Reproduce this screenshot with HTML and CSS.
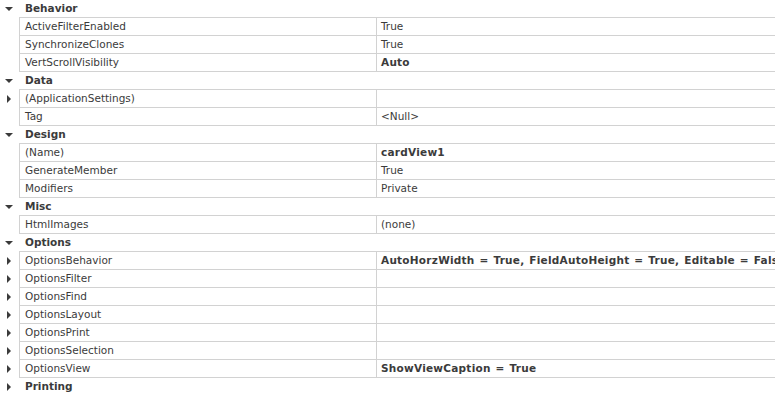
FILE: index.html
```html
<!DOCTYPE html>
<html>
<head>
<meta charset="utf-8">
<link rel="stylesheet" href="styles.css">
</head>
<body>
<div class="grid">
  <div class="cat"><span class="gut"><span class="arr-down"></span></span><span class="cat-name">Behavior</span></div>
  <div class="rows">
    <div class="row"><span class="gut"></span><span class="name">ActiveFilterEnabled</span><span class="val">True</span></div>
    <div class="row"><span class="gut"></span><span class="name">SynchronizeClones</span><span class="val">True</span></div>
    <div class="row"><span class="gut"></span><span class="name">VertScrollVisibility</span><span class="val bold">Auto</span></div>
  </div>
  <div class="cat"><span class="gut"><span class="arr-down"></span></span><span class="cat-name">Data</span></div>
  <div class="rows">
    <div class="row"><span class="gut"><span class="arr-right"></span></span><span class="name">(ApplicationSettings)</span><span class="val"></span></div>
    <div class="row"><span class="gut"></span><span class="name">Tag</span><span class="val">&lt;Null&gt;</span></div>
  </div>
  <div class="cat"><span class="gut"><span class="arr-down"></span></span><span class="cat-name">Design</span></div>
  <div class="rows">
    <div class="row"><span class="gut"></span><span class="name">(Name)</span><span class="val bold">cardView1</span></div>
    <div class="row"><span class="gut"></span><span class="name">GenerateMember</span><span class="val">True</span></div>
    <div class="row"><span class="gut"></span><span class="name">Modifiers</span><span class="val">Private</span></div>
  </div>
  <div class="cat"><span class="gut"><span class="arr-down"></span></span><span class="cat-name">Misc</span></div>
  <div class="rows">
    <div class="row"><span class="gut"></span><span class="name">HtmlImages</span><span class="val">(none)</span></div>
  </div>
  <div class="cat"><span class="gut"><span class="arr-down"></span></span><span class="cat-name">Options</span></div>
  <div class="rows">
    <div class="row"><span class="gut"><span class="arr-right"></span></span><span class="name">OptionsBehavior</span><span class="val bold">AutoHorzWidth = True, FieldAutoHeight = True, Editable = False</span></div>
    <div class="row"><span class="gut"><span class="arr-right"></span></span><span class="name">OptionsFilter</span><span class="val"></span></div>
    <div class="row"><span class="gut"><span class="arr-right"></span></span><span class="name">OptionsFind</span><span class="val"></span></div>
    <div class="row"><span class="gut"><span class="arr-right"></span></span><span class="name">OptionsLayout</span><span class="val"></span></div>
    <div class="row"><span class="gut"><span class="arr-right"></span></span><span class="name">OptionsPrint</span><span class="val"></span></div>
    <div class="row"><span class="gut"><span class="arr-right"></span></span><span class="name">OptionsSelection</span><span class="val"></span></div>
    <div class="row"><span class="gut"><span class="arr-right"></span></span><span class="name">OptionsView</span><span class="val bold">ShowViewCaption = True</span></div>
  </div>
  <div class="cat"><span class="gut"><span class="arr-right"></span></span><span class="cat-name">Printing</span></div>
</div>
</body>
</html>
```
FILE: styles.css
```css
html, body {
  margin: 0;
  padding: 0;
  background: #ffffff;
  overflow: hidden;
}
body {
  width: 775px;
  height: 403px;
  font-family: "DejaVu Sans", sans-serif;
  font-size: 10.5px;
  color: #3b3b3b;
}
.grid {
  display: flex;
  flex-direction: column;
  width: 775px;
}
.cat {
  display: flex;
  height: 17px;
  align-items: center;
}
.cat-name {
  font-weight: bold;
  padding-left: 6px;
  line-height: 17px;
}
.gut {
  flex: 0 0 19px;
  width: 19px;
  height: 17px;
  display: flex;
  align-items: center;
  justify-content: center;
}
.arr-down {
  width: 0;
  height: 0;
  border-left: 4px solid transparent;
  border-right: 4px solid transparent;
  border-top: 4px solid #3b3b3b;
  margin-left: -2px;
  margin-top: 1px;
}
.arr-right {
  width: 0;
  height: 0;
  border-top: 4px solid transparent;
  border-bottom: 4px solid transparent;
  border-left: 4px solid #3b3b3b;
  margin-left: -1px;
}
.rows {
  border-top: 1px solid #d2d2d2;
  margin-left: 19px;
  display: flex;
  flex-direction: column;
}
.rows .gut {
  margin-left: -19px;
}
.row {
  display: flex;
  height: 17px;
  border-bottom: 1px solid #d2d2d2;
  align-items: stretch;
}
.name {
  flex: 0 0 351px;
  width: 351px;
  border-left: 1px solid #d2d2d2;
  padding-left: 5px;
  line-height: 17px;
  white-space: nowrap;
  overflow: hidden;
}
.val {
  flex: 1 1 auto;
  border-left: 1px solid #d2d2d2;
  padding-left: 4px;
  line-height: 17px;
  white-space: nowrap;
  overflow: hidden;
}
.bold {
  font-weight: bold;
  letter-spacing: 0.25px;
  word-spacing: 1px;
}
```
